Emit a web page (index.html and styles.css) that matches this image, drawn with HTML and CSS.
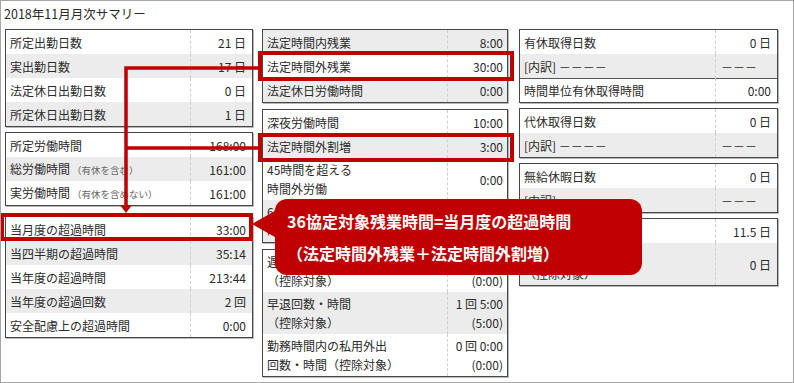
FILE: index.html
```html
<!DOCTYPE html>
<html lang="ja">
<head>
<meta charset="utf-8">
<title>2018年11月月次サマリー</title>
<link rel="stylesheet" href="styles.css">
</head>
<body>
<div class="frame">
  <div class="title">2018年11月月次サマリー</div>
  <div class="columns">
    <div class="col col-left">
      <div class="box">
        <div class="row"><div class="lbl">所定出勤日数</div><div class="val">21 日</div></div>
        <div class="row alt"><div class="lbl">実出勤日数</div><div class="val">17 日</div></div>
        <div class="row"><div class="lbl">法定休日出勤日数</div><div class="val">0 日</div></div>
        <div class="row alt"><div class="lbl">所定休日出勤日数</div><div class="val">1 日</div></div>
      </div>
      <div class="box gap5">
        <div class="row"><div class="lbl">所定労働時間</div><div class="val">168:00</div></div>
        <div class="row alt"><div class="lbl"><span>総労働時間<span class="note">（有休を含む）</span></span></div><div class="val">161:00</div></div>
        <div class="row"><div class="lbl"><span>実労働時間<span class="note">（有休を含めない）</span></span></div><div class="val">161:00</div></div>
      </div>
      <div class="box gap10">
        <div class="row"><div class="lbl">当月度の超過時間</div><div class="val">33:00</div></div>
        <div class="row alt"><div class="lbl">当四半期の超過時間</div><div class="val">35:14</div></div>
        <div class="row"><div class="lbl">当年度の超過時間</div><div class="val">213:44</div></div>
        <div class="row alt"><div class="lbl">当年度の超過回数</div><div class="val">2 回</div></div>
        <div class="row"><div class="lbl">安全配慮上の超過時間</div><div class="val">0:00</div></div>
      </div>
    </div>

    <div class="col col-mid">
      <div class="box">
        <div class="row alt"><div class="lbl">法定時間内残業</div><div class="val">8:00</div></div>
        <div class="row"><div class="lbl">法定時間外残業</div><div class="val">30:00</div></div>
        <div class="row alt"><div class="lbl">法定休日労働時間</div><div class="val">0:00</div></div>
      </div>
      <div class="box gap6">
        <div class="row"><div class="lbl">深夜労働時間</div><div class="val">10:00</div></div>
        <div class="row alt"><div class="lbl">法定時間外割増</div><div class="val">3:00</div></div>
        <div class="row tall"><div class="lbl"><span>45時間を超える</span><span>時間外労働</span></div><div class="val">0:00</div></div>
        <div class="row tall alt"><div class="lbl"><span>60時間を超える</span><span>時間外労働</span></div><div class="val">0:00</div></div>
      </div>
      <div class="box gap6">
        <div class="row tall"><div class="lbl"><span>遅刻回数・時間</span><span>（控除対象）</span></div><div class="val"><span>0 回 0:00</span><span>(0:00)</span></div></div>
        <div class="row tall alt"><div class="lbl"><span>早退回数・時間</span><span>（控除対象）</span></div><div class="val"><span>1 回 5:00</span><span>(5:00)</span></div></div>
        <div class="row tall"><div class="lbl"><span>勤務時間内の私用外出</span><span>回数・時間（控除対象）</span></div><div class="val"><span>0 回 0:00</span><span>(0:00)</span></div></div>
      </div>
    </div>

    <div class="col col-right">
      <div class="box">
        <div class="row"><div class="lbl">有休取得日数</div><div class="val">0 日</div></div>
        <div class="row alt"><div class="lbl">[内訳] －－－－</div><div class="val dash">－－－</div></div>
        <div class="row split"><div class="lbl">時間単位有休取得時間</div><div class="val">0:00</div></div>
      </div>
      <div class="box gap5">
        <div class="row"><div class="lbl">代休取得日数</div><div class="val">0 日</div></div>
        <div class="row alt"><div class="lbl">[内訳] －－－－</div><div class="val dash">－－－</div></div>
      </div>
      <div class="box gap5">
        <div class="row"><div class="lbl">無給休暇日数</div><div class="val">0 日</div></div>
        <div class="row alt"><div class="lbl">[内訳] －－－－</div><div class="val dash">－－－</div></div>
      </div>
      <div class="box gap5">
        <div class="row"><div class="lbl">特別休暇取得日数</div><div class="val">11.5 日</div></div>
        <div class="row tall alt"><div class="lbl"><span>欠勤日数</span><span>（控除対象）</span></div><div class="val">0 日</div></div>
      </div>
    </div>
  </div>

  <svg class="marks" width="794" height="383" viewBox="0 0 794 383" aria-hidden="true">
    <g fill="none" stroke="#c00000" stroke-width="4">
      <rect x="260" y="53" width="252" height="26"/>
      <rect x="260" y="135" width="252" height="25"/>
      <rect x="2" y="215" width="249" height="24"/>
    </g>
    <g fill="none" stroke="#c00000" stroke-width="3.5">
      <path d="M259 68 H126 V206"/>
      <path d="M259 148 H126"/>
    </g>
    <polygon points="120,205 132,205 126,213" fill="#c00000"/>
  </svg>

  <div class="callout">
    <div class="c1">36協定対象残業時間=当月度の超過時間</div>
    <div class="c2">（法定時間外残業＋法定時間外割増）</div>
  </div>
</div>
</body>
</html>
```

FILE: styles.css
```css
* {
  box-sizing: border-box;
}

html,
body {
  margin: 0;
  padding: 0;
  background: #ffffff;
}

body {
  font-family: "Noto Sans CJK JP", "Liberation Sans", sans-serif;
  font-size: 12px;
  color: #2b2b2b;
}

.frame {
  position: relative;
  width: 794px;
  height: 383px;
  border: 1px solid #a6a6a6;
  overflow: hidden;
}

.title {
  height: 28px;
  line-height: 26px;
  padding-left: 3px;
  font-size: 12.5px;
  color: #2b2b2b;
}

.columns {
  display: grid;
  grid-template-columns: 248px 246px 261px;
  column-gap: 9px;
  padding-left: 4px;
  align-items: start;
}

.col-right {
  margin-left: 2px;
}

.box {
  border: 1px solid #474747;
  box-shadow: 1px 1px 0 rgba(0, 0, 0, 0.28);
  background: #ffffff;
}

.gap5 {
  margin-top: 5px;
}

.gap6 {
  margin-top: 6px;
}

.gap10 {
  margin-top: 10px;
}

.row {
  display: flex;
  height: 24px;
  background: #ffffff;
}

.row.alt {
  background: #ececec;
}

.row.tall {
  height: 42px;
}

.row.split {
  box-shadow: inset 0 1px 0 #555555;
}

.lbl {
  flex: 1;
  min-width: 0;
  padding-left: 4px;
  display: flex;
  flex-direction: column;
  justify-content: center;
  line-height: 19px;
  white-space: nowrap;
}

.val {
  width: 62px;
  border-left: 1px dashed #cfcfcf;
  padding-right: 6px;
  display: flex;
  flex-direction: column;
  justify-content: center;
  align-items: flex-end;
  line-height: 19px;
  white-space: nowrap;
}

.col-mid .val {
  width: 60px;
  padding-right: 4px;
}

.val.dash {
  align-items: flex-start;
  padding-left: 5px;
}

.note {
  font-size: 9.5px;
  color: #666666;
  margin-left: 2px;
}

.marks {
  position: absolute;
  left: -1px;
  top: -1px;
  pointer-events: none;
}

.callout {
  position: absolute;
  left: 274px;
  top: 198px;
  width: 367px;
  height: 76px;
  background: #c00000;
  border-radius: 12px;
  color: #ffffff;
  font-weight: bold;
  font-size: 16px;
}

.callout::before {
  content: "";
  position: absolute;
  left: -23px;
  top: 8px;
  border-right: 30px solid #c00000;
  border-top: 17px solid transparent;
  border-bottom: 17px solid transparent;
}

.c1 {
  padding: 10px 0 0 12px;
  line-height: 24px;
  white-space: nowrap;
}

.c2 {
  margin-top: 8px;
  padding-left: 12px;
  line-height: 24px;
  white-space: nowrap;
}
```
